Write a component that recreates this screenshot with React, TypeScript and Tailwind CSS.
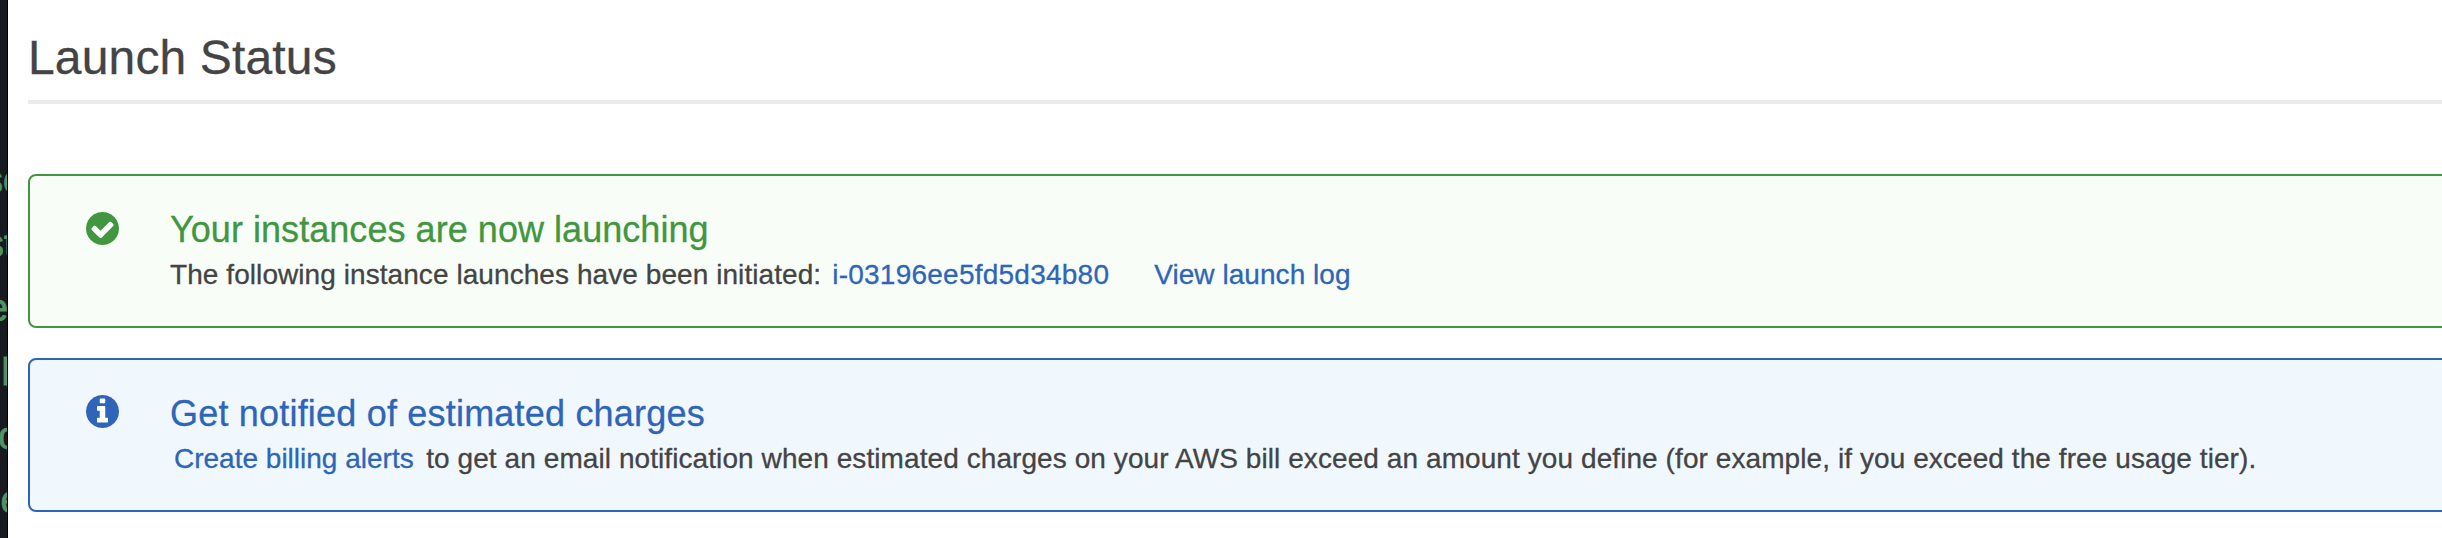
import type { ReactNode } from "react";

const disc =
  "M1536 768q0 209-103 385.5t-279.5 279.5-385.5 103-385.5-103-279.5-279.5-103-385.5 103-385.5 279.5-279.5 385.5-103 385.5 103 279.5 279.5 103 385.5z";
const check =
  "M1284 606q0-28-18-46l-91-90q-19-19-45-19t-45 19l-408 407-226-226q-19-19-45-19t-45 19l-91 90q-18 18-18 46 0 27 18 45l362 362q19 19 45 19 27 0 46-19l543-543q18-18 18-45z";
const info =
  "M1024 1248v-160q0-14-9-23t-23-9h-96v-512q0-14-9-23t-23-9h-320q-14 0-23 9t-9 23v160q0 14 9 23t23 9h96v320h-96q-14 0-23 9t-9 23v160q0 14 9 23t23 9h448q14 0 23-9t9-23zM896 352v-160q0-14-9-23t-23-9h-192q-14 0-23 9t-9 23v160q0 14 9 23t23 9h192q14 0 23-9t9-23z";

function Icon({ glyph, className }: { glyph: string; className: string }) {
  return (
    <svg viewBox="0 0 1536 1536" className={className}>
      <path d={disc} fill="currentColor" />
      <path d={glyph} fill="#fff" />
    </svg>
  );
}

function Alert({ box, icon, children }: { box: string; icon: ReactNode; children: ReactNode }) {
  return (
    <section className={`flex h-[154px] w-[2440px] rounded-lg border-2 pl-[55.5px] pt-8 ${box}`}>
      {icon}
      <div className="ml-[51.5px] whitespace-nowrap">{children}</div>
    </section>
  );
}

export default function App() {
  return (
    <div className="flex h-[538px] w-full overflow-hidden bg-white font-['Liberation_Sans',sans-serif] text-[#444] [-webkit-text-stroke:0.3px]">
      <aside className="h-full w-2 shrink-0 overflow-hidden border-r border-black bg-[#171b20] pt-[148px] text-[38px] leading-[64px] text-[#4f9468] [-webkit-text-stroke:0.8px]">
        <div className="-ml-4 whitespace-nowrap">sc</div>
        <div className="-ml-[15px] whitespace-nowrap">st</div>
        <div className="-ml-[13px]">e</div>
        <div className="ml-[1.5px]">l</div>
        <div className="-ml-[2px]">c</div>
        <div className="ml-[0.5px]">e</div>
      </aside>
      <main className="min-w-0 flex-1 overflow-hidden pl-5">
        <h1 className="h-[104px] w-[2440px] border-b-4 border-[#ebebeb] pt-[31px] text-[48px] leading-[54px] tracking-[0.15px]">
          Launch Status
        </h1>
        <div className="mt-[70px] flex flex-col gap-[30px]">
          <Alert
            box="border-[#41963f] bg-[#f8fdf7]"
            icon={<Icon glyph={check} className="mt-[3.5px] size-[33px] shrink-0 text-[#41963f]" />}
          >
            <h2 className="text-[36px] leading-[44px] tracking-[0.05px] text-[#41963f]">
              Your instances are now launching
            </h2>
            <p className="mt-[3px] flex text-[28px] leading-[40px]">
              <span className="tracking-[0.07px]">The following instance launches have been initiated:</span>
              <a className="ml-[11px] tracking-[0.24px] text-[#2f65b8]">i-03196ee5fd5d34b80</a>
              <a className="ml-[45px] tracking-[0.05px] text-[#2f65b8]">View launch log</a>
            </p>
          </Alert>
          <Alert
            box="border-[#2f65b8] bg-[#f0f8fe]"
            icon={<Icon glyph={info} className="mt-[3px] size-[33px] shrink-0 text-[#2f65b8]" />}
          >
            <h2 className="text-[36px] leading-[44px] tracking-[0.2px] text-[#2f65b8]">
              Get notified of estimated charges
            </h2>
            <p className="mt-[3px] flex text-[28px] leading-[40px]">
              <a className="ml-1 text-[#2f65b8]">Create billing alerts</a>
              <span className="ml-[12.5px] tracking-[0.08px]">
                to get an email notification when estimated charges on your AWS bill exceed an amount you define (for
                example, if you exceed the free usage tier).
              </span>
            </p>
          </Alert>
        </div>
      </main>
    </div>
  );
}
